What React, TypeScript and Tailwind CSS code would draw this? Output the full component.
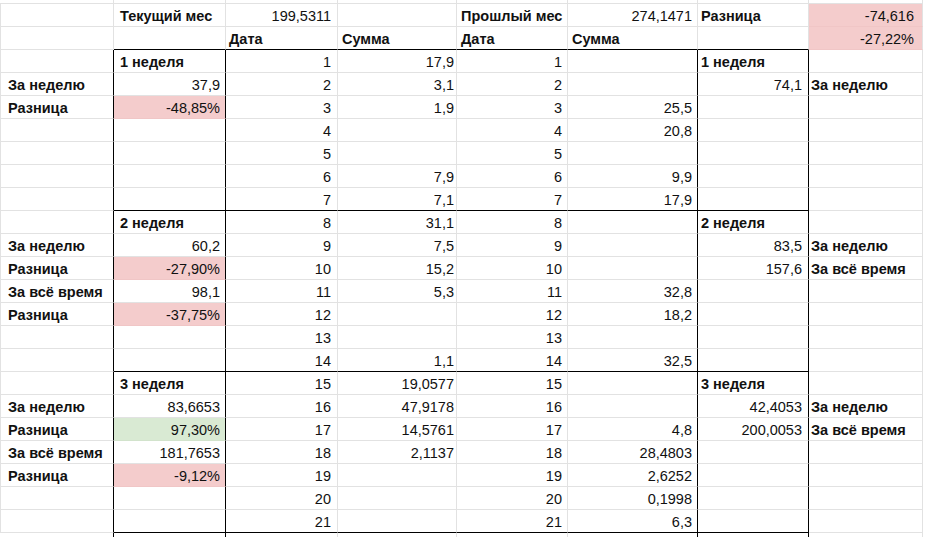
const rows: string[][] = [
  ['', 'Текущий мес', '199,5311', '', 'Прошлый мес', '274,1471', 'Разница', '-74,616'],
  ['', '', 'Дата', 'Сумма', 'Дата', 'Сумма', '', '-27,22%'],
  ['', '1 неделя', '1', '17,9', '1', '', '1 неделя', ''],
  ['За неделю', '37,9', '2', '3,1', '2', '', '74,1', 'За неделю'],
  ['Разница', '-48,85%', '3', '1,9', '3', '25,5', '', ''],
  ['', '', '4', '', '4', '20,8', '', ''],
  ['', '', '5', '', '5', '', '', ''],
  ['', '', '6', '7,9', '6', '9,9', '', ''],
  ['', '', '7', '7,1', '7', '17,9', '', ''],
  ['', '2 неделя', '8', '31,1', '8', '', '2 неделя', ''],
  ['За неделю', '60,2', '9', '7,5', '9', '', '83,5', 'За неделю'],
  ['Разница', '-27,90%', '10', '15,2', '10', '', '157,6', 'За всё время'],
  ['За всё время', '98,1', '11', '5,3', '11', '32,8', '', ''],
  ['Разница', '-37,75%', '12', '', '12', '18,2', '', ''],
  ['', '', '13', '', '13', '', '', ''],
  ['', '', '14', '1,1', '14', '32,5', '', ''],
  ['', '3 неделя', '15', '19,0577', '15', '', '3 неделя', ''],
  ['За неделю', '83,6653', '16', '47,9178', '16', '', '42,4053', 'За неделю'],
  ['Разница', '97,30%', '17', '14,5761', '17', '4,8', '200,0053', 'За всё время'],
  ['За всё время', '181,7653', '18', '2,1137', '18', '28,4803', '', ''],
  ['Разница', '-9,12%', '19', '', '19', '2,6252', '', ''],
  ['', '', '20', '', '20', '0,1998', '', ''],
  ['', '', '21', '', '21', '6,3', '', ''],
];

const pink = new Set(['1-7', '2-7', '5-1', '12-1', '14-1', '21-1']);
const green = new Set(['19-1']);

const padCols = [
  'pl-[7px] pr-[4px] border-l border-l-[#e2e2e2]',
  'pl-[6px] pr-[5px]',
  'pl-[3px] pr-[6px]',
  'pl-[4px] pr-[2px]',
  'pl-[4px] pr-[5px]',
  'pl-[4px] pr-[5px]',
  'pl-[3px] pr-[6px]',
  'pl-[2px] pr-[8px]',
];

const isNum = (s: string) => /^-?[\d,]+%?$/.test(s);

function Cell({ r, c, v }: { r: number; c: number; v: string }) {
  const key = `${r}-${c}`;
  const rightBlack = r >= 3 && (c === 0 || c === 1 || c === 5 || c === 6);
  const bottomBlack = (r === 2 || r === 9 || r === 16 || r === 23) && c >= 1 && c <= 6;
  let bg = 'bg-white';
  let edge = 'border-r-[#e2e2e2] border-b-[#e2e2e2]';
  if (pink.has(key)) {
    bg = 'bg-[#f4cccc]';
    edge = 'border-r-[#e2e2e2] border-b-[#f0c6c6]';
  }
  if (green.has(key)) {
    bg = 'bg-[#d9ead3]';
    edge = 'border-r-[#e2e2e2] border-b-[#d2e3cc]';
  }
  const num = isNum(v);
  return (
    <div
      className={`h-[23px] border-r border-b flex items-end pb-[1px] overflow-hidden whitespace-nowrap ${bg} ${edge} ${padCols[c]} ${
        rightBlack ? 'border-r-black' : ''
      } ${bottomBlack ? 'border-b-black' : ''} ${num ? 'justify-end' : 'justify-start font-bold'}`}
    >
      {v}
    </div>
  );
}

export default function App() {
  return (
    <div className="w-[925px] h-[537px] overflow-hidden bg-white text-[#111] text-[14.5px] leading-[17px] font-['Liberation_Sans',Arial,sans-serif]">
      <div className="grid grid-cols-[114px_112px_112px_119px_111px_130px_111px_114px]">
        {Array.from({ length: 8 }).map((_, c) => (
          <div key={`top-${c}`} className="h-[4px] border-r border-b border-[#e2e2e2]" />
        ))}
        {rows.map((row, ri) => row.map((v, c) => <Cell key={`${ri + 1}-${c}`} r={ri + 1} c={c} v={v} />))}
        {Array.from({ length: 8 }).map((_, c) => (
          <div
            key={`end-${c}`}
            className={`h-[10px] border-r border-[#e2e2e2] ${c === 0 || c === 1 || c === 5 || c === 6 ? 'border-r-black' : ''}`}
          />
        ))}
      </div>
    </div>
  );
}
